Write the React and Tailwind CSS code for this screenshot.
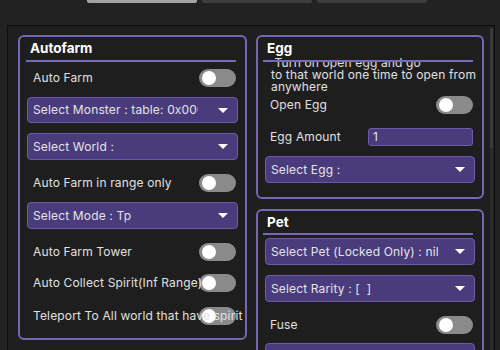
import React from "react";

function Toggle() {
  return (
    <div className="absolute right-0 top-0 w-[37px] h-[18px] rounded-full bg-[#8a8a8a] z-10">
      <div className="absolute left-[3px] top-[2px] w-[14px] h-[14px] rounded-full bg-white" />
    </div>
  );
}

function ToggleRow({ label, mt, textPl = "pl-[7px]" }) {
  return (
    <div className={`relative shrink-0 h-[18px] ${mt}`}>
      <Toggle />
      <div className={`relative z-20 ${textPl} h-[18px] flex items-center whitespace-nowrap text-[12px] tracking-[0.15px] text-[#e0e0e0]`}>{label}</div>
    </div>
  );
}

function Dropdown({ label, mt, h = "h-[27px]", cls = "", tw = "w-[165px]" }) {
  return (
    <div className={`${h} ${mt} ${cls} shrink-0 rounded-[4px] bg-[#4a3b7d] border border-[#6b5ba8] flex items-center pl-[5px] pr-[9px]`}>
      <div className={`${tw} overflow-hidden whitespace-nowrap text-[12px] tracking-[0.15px] text-[#e4e4e4]`}>{label}</div>
      <div className="ml-auto w-0 h-0 border-l-[5px] border-r-[5px] border-t-[5px] border-l-transparent border-r-transparent border-t-white" />
    </div>
  );
}

function Title({ children, h = "h-[23px]" }) {
  return (
    <div className={`${h} shrink-0 flex items-center pl-[4px] text-[13.5px] font-bold text-white`}>{children}</div>
  );
}

function Line() {
  return <div className="relative z-10 shrink-0 h-[2px] bg-[#7a69ba]" />;
}

export default function App() {
  return (
    <div className="w-[500px] h-[350px] bg-[#222222] overflow-hidden font-['Inter',sans-serif]">
      <div className="flex gap-[5px] pl-[87px]">
        <div className="w-[110px] h-[3px] rounded-b-[2px] bg-[#a3a3a3]" />
        <div className="w-[110px] h-[3px] rounded-b-[2px] bg-[#3d3d3d]" />
        <div className="w-[110px] h-[3px] rounded-b-[2px] bg-[#3d3d3d]" />
      </div>
      <div className="mt-[22px] ml-[7px] w-[488px] h-[330px] border border-[#0e0e0e] bg-[#1f1f1f] flex items-start pt-[9px] pl-[10px] relative">
        {/* Left card */}
        <div className="shrink-0 w-[229px] h-[305px] border-2 border-[#7766b3] rounded-[6px] bg-[#1e1e1e] pl-[6px] pr-[9px] flex flex-col">
          <Title>Autofarm</Title>
          <Line />
          <ToggleRow label="Auto Farm" mt="mt-[7px]" />
          <Dropdown label="Select Monster : table: 0x000000" mt="mt-[10px]" h="h-[26px]" cls="ml-[1px] -mr-[2px]" />
          <Dropdown label="Select World :" mt="mt-[10px]" cls="ml-[1px] -mr-[2px]" />
          <ToggleRow label="Auto Farm in range only" mt="mt-[14px]" />
          <Dropdown label="Select Mode : Tp" mt="mt-[10px]" cls="ml-[1px] -mr-[2px]" />
          <ToggleRow label="Auto Farm Tower" mt="mt-[14px]" />
          <ToggleRow label="Auto Collect Spirit(Inf Range)" mt="mt-[13px]" />
          <ToggleRow label="Teleport To All world that have spirit" mt="mt-[15px]" />
        </div>
        {/* Right column */}
        <div className="shrink-0 ml-[9px] w-[228px] flex flex-col">
          <div className="shrink-0 h-[164px] border-2 border-[#7766b3] rounded-[6px] bg-[#1e1e1e] pl-[5px] pr-[9px] flex flex-col">
            <Title>Egg</Title>
            <Line />
            <div className="shrink-0 -mt-[5px] pl-[8px] text-[12px] leading-[12px] tracking-[0.15px] text-[#e0e0e0] whitespace-nowrap">
              &nbsp;Turn on open egg and go<br />to that world one time to open from<br />anywhere
            </div>
            <ToggleRow label="Open Egg" mt="mt-[3px]" textPl="pl-[7px]" />
            <div className="shrink-0 mt-[14px] h-[18px] flex items-center">
              <div className="pl-[7px] text-[12px] tracking-[0.15px] text-[#e0e0e0]">Egg Amount</div>
              <div className="ml-auto w-[105px] h-[18px] rounded-[3px] bg-[#4a3b7d] border border-[#6b5ba8] flex items-center pl-[4px] text-[12px] text-[#e4e4e4]">1</div>
            </div>
            <Dropdown label="Select Egg :" mt="mt-[10px]" cls="ml-[2px] -mr-[2px]" tw="w-[180px]" />
          </div>
          <div className="shrink-0 mt-[10px] h-[200px] border-2 border-[#7766b3] rounded-[6px] bg-[#1e1e1e] pl-[5px] pr-[9px] flex flex-col">
            <Title h="h-[22px]">Pet</Title>
            <Line />
            <Dropdown label="Select Pet (Locked Only) : nil" mt="mt-[3px]" cls="ml-[2px] -mr-[2px]" tw="w-[180px]" />
            <Dropdown label={"Select Rarity : [\u00a0\u00a0]"} mt="mt-[10px]" cls="ml-[2px] -mr-[2px]" tw="w-[180px]" />
            <ToggleRow label="Fuse" mt="mt-[14px]" />
            <Dropdown label="Fuse Mode" mt="mt-[9px]" cls="ml-[2px] -mr-[2px]" tw="w-[180px]" />
          </div>
        </div>
        <div className="absolute right-[1px] top-[2px] w-[3px] h-[330px] bg-[#2c2c2c]">
          <div className="w-[3px] h-[120px] bg-[#3a3a3a]" />
        </div>
      </div>
    </div>
  );
}
